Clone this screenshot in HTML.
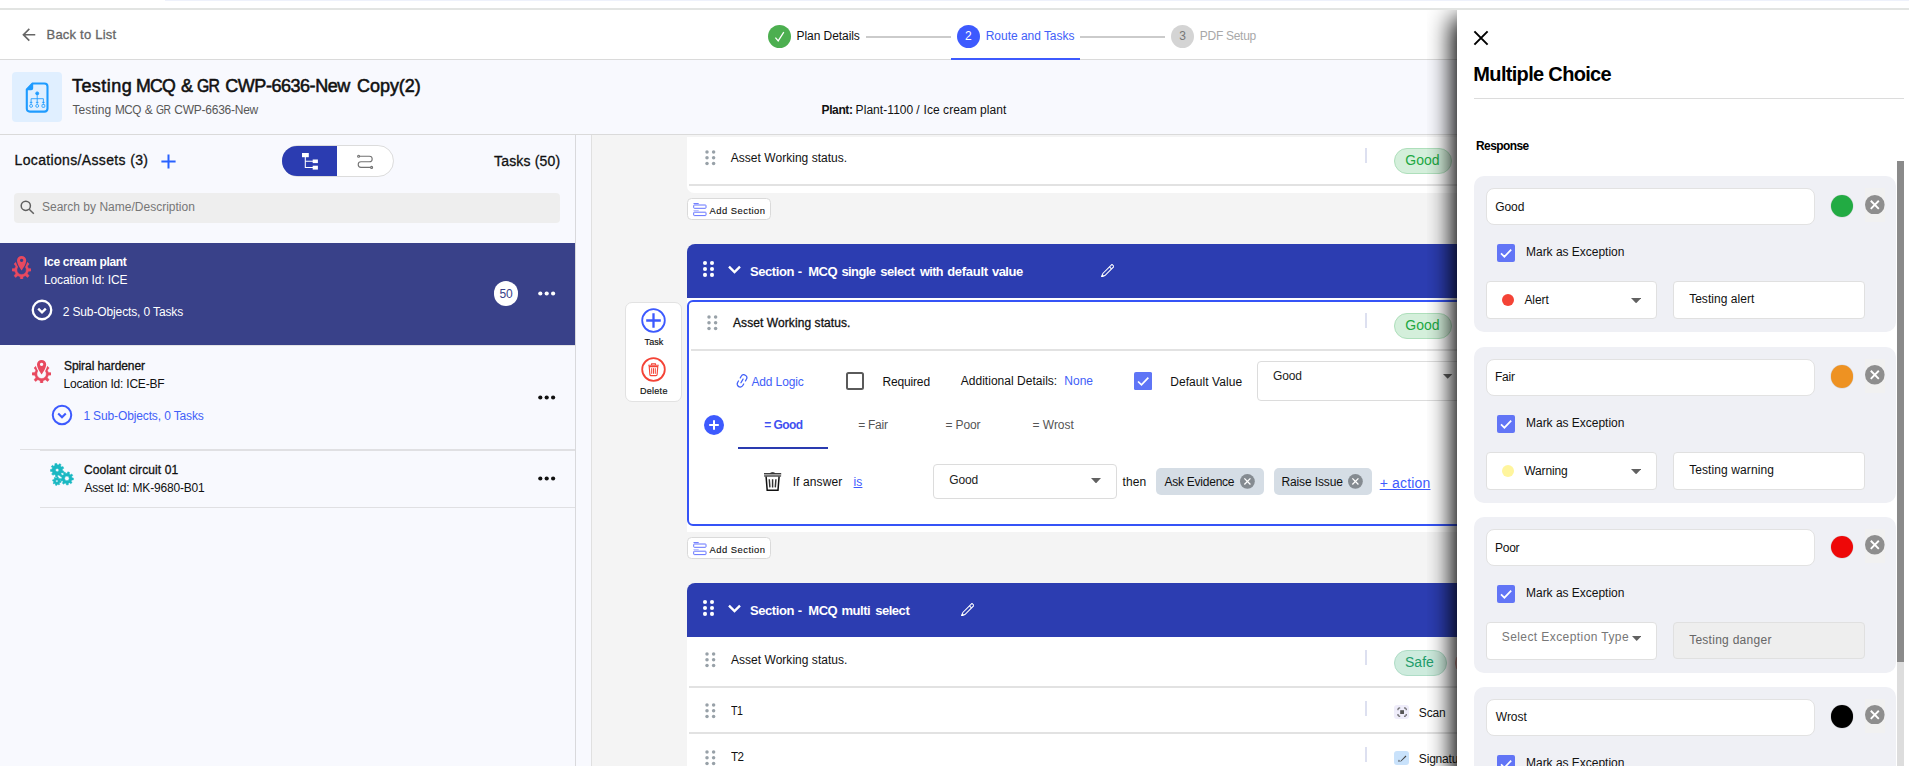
<!DOCTYPE html>
<html><head><meta charset="utf-8"><title>Route and Tasks</title>
<style>
html,body{margin:0;padding:0}
html{overflow:hidden;width:1909px;height:766px}
body{width:1909px;height:766px;overflow:hidden;background:#fff;position:relative;font-family:"Liberation Sans", sans-serif;}
.a{position:absolute;display:block}
.t{position:absolute;white-space:nowrap;line-height:1em;font-family:"Liberation Sans", sans-serif;}
b{font-weight:700}
#root{position:absolute;left:0;top:0;width:1909px;height:766px;overflow:hidden;background:#fff}
</style></head><body><div id="root">
<div class="a" style="left:165px;top:0;width:1744px;height:1px;background:#eef1fb"></div>
<div class="a" style="left:0;top:8px;width:1909px;height:2px;background:#e2e4e2"></div>
<div class="a" style="left:0;top:10px;width:1909px;height:49px;background:#fff"></div>
<div class="a" style="left:0;top:59px;width:1909px;height:1px;background:#dadada"></div>
<div class="a" style="left:0;top:60px;width:1909px;height:74px;background:#f8f9fe"></div>
<div class="a" style="left:0;top:134px;width:1909px;height:1px;background:#dadada"></div>
<svg class="a" style="left:18.75px;top:24.65px" width="19.5" height="19.5" viewBox="0 0 24 24"><path fill="#666" d="M20 11H7.83l5.59-5.59L12 4l-8 8 8 8 1.41-1.41L7.83 13H20v-2z"/></svg>
<div class="a" style="left:12px;top:72px;width:50px;height:50px;border-radius:4px;background:#e0efff"></div>
<svg class="a" style="left:25.2px;top:81.6px" width="24.4" height="31.2" viewBox="0 0 24.4 31.2"><g fill="none" stroke="#1e9bff" stroke-width="2.1" stroke-linejoin="round">
<path d="M7.6 1.5 H19.4 Q22.5 1.5 22.5 4.6 V26.5 Q22.5 29.6 19.4 29.6 H4.9 Q1.8 29.6 1.8 26.5 V7.6 Z"/></g>
<path d="M1.8 7.6 L7.6 1.5 V6.2 Q7.6 7.6 6.2 7.6 Z" fill="#1e9bff" stroke="#1e9bff" stroke-width="1.2" stroke-linejoin="round"/>
<g fill="none" stroke="#1e9bff" stroke-width="0.85"><circle cx="12.2" cy="11.4" r="1.5" stroke-width="0.9" fill="#1e9bff"/><path d="M12.2 13.2 V21.2 M6.1 21.2 V16.7 H18.4 V21.2"/>
<path d="M4.9 20.2 H7.3 L6.1 21.6 Z M11 20.2 H13.4 L12.2 21.6 Z M17.2 20.2 H19.6 L18.4 21.6 Z" fill="#1e9bff" stroke-width=".4"/>
<circle cx="6.1" cy="23.9" r="1.45"/><circle cx="12.2" cy="23.9" r="1.45"/><rect x="17" y="22.5" width="2.8" height="2.8" rx=".5"/></g></svg>
<div class="a" style="left:768.1px;top:24.9px;width:23px;height:23px;border-radius:50%;background:#4caf50"></div>
<svg class="a" style="left:773px;top:30px" width="14" height="13" viewBox="0 0 14 13"><path d="M2.4 7.6 L5.2 10.9 L10.8 2.2" fill="none" stroke="#fff" stroke-width="1.25"/></svg>
<div class="a" style="left:866px;top:36px;width:85px;height:2px;background:#cbcbcb"></div>
<div class="a" style="left:956.9px;top:24.9px;width:23px;height:23px;border-radius:50%;background:#3d5afe"></div>
<div class="a" style="left:1080px;top:36px;width:85px;height:2px;background:#cbcbcb"></div>
<div class="a" style="left:1171px;top:24.9px;width:23px;height:23px;border-radius:50%;background:#d4d4d4"></div>
<div class="a" style="left:951px;top:58px;width:129px;height:2px;background:#3d5afe"></div>
<div class="a" style="left:0;top:135px;width:575px;height:631px;background:#f8f9fe"></div>
<div class="a" style="left:575px;top:135px;width:1px;height:631px;background:#d9d9dc"></div>
<div class="a" style="left:576px;top:135px;width:15px;height:631px;background:#f8f9fe"></div>
<div class="a" style="left:591px;top:135px;width:1px;height:631px;background:#e0e0e0"></div>
<div class="a" style="left:592px;top:135px;width:900px;height:631px;background:#f4f4f4"></div>
<svg class="a" style="left:161.3px;top:153.6px" width="15" height="15" viewBox="0 0 15 15"><path d="M7.5 0.4 V14.6 M0.4 7.5 H14.6" stroke="#2962ff" stroke-width="2" fill="none"/></svg>
<div class="a" style="left:281.6px;top:145px;width:112.6px;height:31.8px;border-radius:15.9px;background:#fff;border:1px solid #dcdcdc;box-sizing:border-box"></div>
<div class="a" style="left:281.8px;top:146px;width:55.2px;height:29.8px;border-radius:14.9px 0 0 14.9px;background:#2b3cb1"></div>
<svg class="a" style="left:302px;top:153.3px" width="17" height="18" viewBox="0 0 17 18"><g fill="#fff"><rect x="0" y="0" width="6.8" height="4.2"/><rect x="10.7" y="6.5" width="5.2" height="3.6"/><rect x="10.7" y="12.7" width="5.2" height="3.9"/></g>
<path d="M3.3 4 V14.5 H11 M3.3 8.3 H11" fill="none" stroke="#fff" stroke-width="1.05"/></svg>
<svg class="a" style="left:355.6px;top:154.2px" width="19" height="16" viewBox="0 0 19 16"><g fill="none" stroke="#727272" stroke-width="1.1">
<circle cx="2.6" cy="2.2" r="1.0"/><path d="M3.6 2.2 H13.4 A2.8 2.8 0 0 1 13.4 7.8 H5 A2.8 2.8 0 0 0 5 13.4 H14.6"/><circle cx="15.6" cy="13.4" r="1.0"/></g></svg>
<div class="a" style="left:14px;top:193px;width:546px;height:30px;border-radius:4px;background:#eeeeee"></div>
<svg class="a" style="left:19.6px;top:200.2px" width="15" height="15" viewBox="0 0 15 15"><g fill="none" stroke="#606060" stroke-width="1.5"><circle cx="5.8" cy="5.8" r="4.6"/><path d="M9.2 9.2 L13.8 13.8"/></g></svg>
<div class="a" style="left:0;top:243px;width:575px;height:101.6px;background:#394189"></div>
<svg class="a" style="left:12.2px;top:255.7px" width="19.2" height="23.4" viewBox="0 0 19.2 23.4">
<path d="M16.35 12.45 L19.13 12.77 L19.13 15.03 L16.35 15.35 L15.40 17.64 L17.14 19.84 L15.54 21.44 L13.34 19.70 L11.05 20.65 L10.73 23.43 L8.47 23.43 L8.15 20.65 L5.86 19.70 L3.66 21.44 L2.06 19.84 L3.80 17.64 L2.85 15.35 L0.07 15.03 L0.07 12.77 L2.85 12.45 L3.80 10.16 L2.06 7.96 L3.66 6.36 L5.86 8.10 L8.15 7.15 L8.47 4.37 L10.73 4.37 L11.05 7.15 L13.34 8.10 L15.54 6.36 L17.14 7.96 L15.40 10.16 Z M14.30 13.90 A4.7 4.7 0 1 0 4.90 13.90 A4.7 4.7 0 1 0 14.30 13.90 Z" fill="#e8495f" fill-rule="evenodd" stroke="#e8495f" stroke-width=".5" stroke-linejoin="round"/>
<path d="M9.6 14.6 C9.6 14.6 5 8.6 5 4.6 A4.6 4.6 0 0 1 14.2 4.6 C14.2 8.6 9.6 14.6 9.6 14.6 Z" fill="#394189" stroke="#394189" stroke-width="2.1"/>
<path fill-rule="evenodd" fill="#e8495f" d="M9.6 14.5 C9.6 14.5 5 8.6 5 4.6 A4.6 4.6 0 0 1 14.2 4.6 C14.2 8.6 9.6 14.5 9.6 14.5 Z M9.6 2.7 A1.65 1.65 0 1 0 9.61 2.7 Z"/>
</svg>
<svg class="a" style="left:30.6px;top:299px" width="22" height="22" viewBox="0 0 22 22">
<circle cx="11" cy="11" r="9.25" fill="none" stroke="#fff" stroke-width="2.3"/>
<path d="M7.2 9.6 L11 13.3 L14.8 9.6" fill="none" stroke="#fff" stroke-width="2.4"/></svg>
<div class="a" style="left:493.9px;top:281.1px;width:24.6px;height:24.6px;border-radius:50%;background:#fff"></div>
<svg class="a" style="left:538px;top:291.2px" width="18" height="5" viewBox="0 0 18 5">
<circle cx="2.3" cy="2.5" r="2.1" fill="#fff"/><circle cx="8.7" cy="2.5" r="2.1" fill="#fff"/><circle cx="15.1" cy="2.5" r="2.1" fill="#fff"/></svg>
<div class="a" style="left:20px;top:345px;width:555px;height:1px;background:#e3e3e6"></div>
<svg class="a" style="left:32.1px;top:359.9px" width="19.2" height="23.4" viewBox="0 0 19.2 23.4">
<path d="M16.35 12.45 L19.13 12.77 L19.13 15.03 L16.35 15.35 L15.40 17.64 L17.14 19.84 L15.54 21.44 L13.34 19.70 L11.05 20.65 L10.73 23.43 L8.47 23.43 L8.15 20.65 L5.86 19.70 L3.66 21.44 L2.06 19.84 L3.80 17.64 L2.85 15.35 L0.07 15.03 L0.07 12.77 L2.85 12.45 L3.80 10.16 L2.06 7.96 L3.66 6.36 L5.86 8.10 L8.15 7.15 L8.47 4.37 L10.73 4.37 L11.05 7.15 L13.34 8.10 L15.54 6.36 L17.14 7.96 L15.40 10.16 Z M14.30 13.90 A4.7 4.7 0 1 0 4.90 13.90 A4.7 4.7 0 1 0 14.30 13.90 Z" fill="#e8495f" fill-rule="evenodd" stroke="#e8495f" stroke-width=".5" stroke-linejoin="round"/>
<path d="M9.6 14.6 C9.6 14.6 5 8.6 5 4.6 A4.6 4.6 0 0 1 14.2 4.6 C14.2 8.6 9.6 14.6 9.6 14.6 Z" fill="#f8f9fe" stroke="#f8f9fe" stroke-width="2.1"/>
<path fill-rule="evenodd" fill="#e8495f" d="M9.6 14.5 C9.6 14.5 5 8.6 5 4.6 A4.6 4.6 0 0 1 14.2 4.6 C14.2 8.6 9.6 14.5 9.6 14.5 Z M9.6 2.7 A1.65 1.65 0 1 0 9.61 2.7 Z"/>
</svg>
<svg class="a" style="left:50.8px;top:404.2px" width="22" height="22" viewBox="0 0 22 22">
<circle cx="11" cy="11" r="9.25" fill="none" stroke="#3d5afe" stroke-width="2.0"/>
<path d="M7.2 9.6 L11 13.3 L14.8 9.6" fill="none" stroke="#3d5afe" stroke-width="2.1"/></svg>
<svg class="a" style="left:538px;top:395.2px" width="18" height="5" viewBox="0 0 18 5">
<circle cx="2.3" cy="2.5" r="2.1" fill="#111"/><circle cx="8.7" cy="2.5" r="2.1" fill="#111"/><circle cx="15.1" cy="2.5" r="2.1" fill="#111"/></svg>
<div class="a" style="left:20px;top:449px;width:555px;height:1px;background:#e0e0e3"></div>
<div class="a" style="left:40px;top:450px;width:535px;height:1px;background:#e0e0e3"></div>
<svg class="a" style="left:50.0px;top:463.2px" width="24" height="23" viewBox="0 0 24 23">
<g fill="#1ab8c2" fill-rule="evenodd" stroke="#1ab8c2" stroke-width=".5" stroke-linejoin="round">
<path d="M12.43 7.57 L13.91 8.19 L13.35 9.99 L11.78 9.66 L10.90 10.82 L11.64 12.25 L10.05 13.27 L9.07 12.01 L7.64 12.33 L7.30 13.90 L5.42 13.66 L5.47 12.06 L4.17 11.39 L2.90 12.37 L1.62 10.98 L2.69 9.79 L2.12 8.44 L0.52 8.38 L0.43 6.49 L2.02 6.26 L2.45 4.87 L1.26 3.78 L2.41 2.28 L3.77 3.13 L5.00 2.33 L4.78 0.74 L6.63 0.32 L7.13 1.85 L8.58 2.03 L9.44 0.68 L11.12 1.54 L10.52 3.03 L11.51 4.10 L13.04 3.62 L13.77 5.36 L12.36 6.12 Z M8.90 7.10 A1.7 1.7 0 1 0 5.50 7.10 A1.7 1.7 0 1 0 8.90 7.10 Z"/>
<path d="M21.97 14.84 L23.49 15.14 L23.31 16.97 L21.76 16.95 L21.14 18.23 L22.12 19.44 L20.80 20.72 L19.62 19.71 L18.33 20.30 L18.30 21.85 L16.47 21.99 L16.21 20.45 L14.85 20.07 L13.83 21.24 L12.34 20.17 L13.13 18.83 L12.33 17.66 L10.79 17.90 L10.34 16.12 L11.80 15.60 L11.95 14.19 L10.61 13.39 L11.41 11.74 L12.87 12.28 L13.88 11.29 L13.38 9.82 L15.05 9.06 L15.82 10.42 L17.23 10.31 L17.79 8.86 L19.56 9.36 L19.27 10.89 L20.43 11.71 L21.78 10.96 L22.82 12.48 L21.62 13.47 Z M19.20 15.40 A2.3 2.3 0 1 0 14.60 15.40 A2.3 2.3 0 1 0 19.20 15.40 Z"/>
<path d="M10.20 17.98 L11.20 18.28 L10.93 19.60 L9.89 19.49 L9.32 20.35 L9.81 21.27 L8.69 22.01 L8.03 21.20 L7.02 21.40 L6.72 22.40 L5.40 22.13 L5.51 21.09 L4.65 20.52 L3.73 21.01 L2.99 19.89 L3.80 19.23 L3.60 18.22 L2.60 17.92 L2.87 16.60 L3.91 16.71 L4.48 15.85 L3.99 14.93 L5.11 14.19 L5.77 15.00 L6.78 14.80 L7.08 13.80 L8.40 14.07 L8.29 15.11 L9.15 15.68 L10.07 15.19 L10.81 16.31 L10.00 16.97 Z M8.05 18.10 A1.15 1.15 0 1 0 5.75 18.10 A1.15 1.15 0 1 0 8.05 18.10 Z"/>
</g></svg>
<svg class="a" style="left:538px;top:476.3px" width="18" height="5" viewBox="0 0 18 5">
<circle cx="2.3" cy="2.5" r="2.1" fill="#111"/><circle cx="8.7" cy="2.5" r="2.1" fill="#111"/><circle cx="15.1" cy="2.5" r="2.1" fill="#111"/></svg>
<div class="a" style="left:40px;top:507px;width:535px;height:1px;background:#e0e0e3"></div>
<div class="a" style="left:687px;top:137px;width:800px;height:55.8px;background:#fff;border-radius:0 0 0 7px"></div>
<div class="a" style="left:689px;top:184px;width:800px;height:2px;background:#e2e2e2"></div>
<svg class="a" style="left:703.6px;top:149.2px" width="14" height="19" viewBox="0 0 14 19"><circle cx="3.0" cy="3.0" r="1.75" fill="#98a1a8"/><circle cx="3.0" cy="8.75" r="1.75" fill="#98a1a8"/><circle cx="3.0" cy="14.5" r="1.75" fill="#98a1a8"/><circle cx="9.6" cy="3.0" r="1.75" fill="#98a1a8"/><circle cx="9.6" cy="8.75" r="1.75" fill="#98a1a8"/><circle cx="9.6" cy="14.5" r="1.75" fill="#98a1a8"/></svg>
<div class="a" style="left:1365px;top:148px;width:2px;height:15px;background:#dde0f0"></div>
<div class="a" style="left:1394px;top:148px;width:57.5px;height:26px;border-radius:13.0px;background:#d4efdb;border:1px solid #aedfbb;box-sizing:border-box"></div>
<div class="a" style="left:687.4px;top:198.3px;width:83.2px;height:21.5px;border:1px solid #dadada;border-radius:4.5px;background:#fff;box-sizing:border-box"></div>
<svg class="a" style="left:692.5px;top:202.70000000000002px" width="14" height="14" viewBox="0 0 14 14"><g fill="none" stroke="#6473ff" stroke-width="1">
<path d="M0.5 0.6 H5.7"/><path d="M0.5 7.7 H5.7" opacity=".55"/><rect x="0.7" y="2.0" width="12.3" height="3.3" rx=".6"/><rect x="0.7" y="9.2" width="12.3" height="3.4" rx=".6"/></g></svg>
<div class="a" style="left:687px;top:244px;width:800px;height:54px;background:#2c3db1;border-radius:8px 0 0 0"></div>
<svg class="a" style="left:702px;top:260.2px" width="14" height="19" viewBox="0 0 14 19"><circle cx="3" cy="3.0" r="2.05" fill="#fff"/><circle cx="3" cy="8.95" r="2.05" fill="#fff"/><circle cx="3" cy="14.9" r="2.05" fill="#fff"/><circle cx="10" cy="3.0" r="2.05" fill="#fff"/><circle cx="10" cy="8.95" r="2.05" fill="#fff"/><circle cx="10" cy="14.9" r="2.05" fill="#fff"/></svg>
<svg class="a" style="left:727px;top:265px" width="15" height="10" viewBox="0 0 15 10"><path d="M2 1.7 L7.5 7.2 L13 1.7" fill="none" stroke="#fff" stroke-width="2.35"/></svg>
<svg class="a" style="left:1100.7px;top:263.7px" width="13.6" height="13.6" viewBox="0 0 13.6 13.6"><g transform="translate(0.55 12.85) rotate(-45)" fill="none" stroke="#fff" stroke-width="1.05" stroke-linejoin="miter">
<path d="M0 0 L3.3 -1.45 H16.2 V1.45 H3.3 Z"/><path d="M12.6 -1.45 V1.45"/><path d="M0 0 L2 -0.9 V0.9 Z" fill="#fff" stroke-width=".6"/></g></svg>
<div class="a" style="left:687px;top:298px;width:800px;height:234px;background:#fff"></div>
<div class="a" style="left:687px;top:300px;width:800px;height:226.2px;border:2px solid #3553f7;border-radius:6px 0 0 6px;box-sizing:border-box;background:#fff"></div>
<div class="a" style="left:691px;top:349px;width:800px;height:2px;background:#e2e2e2"></div>
<svg class="a" style="left:706.0px;top:314.2px" width="14" height="19" viewBox="0 0 14 19"><circle cx="3.0" cy="3.0" r="1.75" fill="#98a1a8"/><circle cx="3.0" cy="8.75" r="1.75" fill="#98a1a8"/><circle cx="3.0" cy="14.5" r="1.75" fill="#98a1a8"/><circle cx="9.6" cy="3.0" r="1.75" fill="#98a1a8"/><circle cx="9.6" cy="8.75" r="1.75" fill="#98a1a8"/><circle cx="9.6" cy="14.5" r="1.75" fill="#98a1a8"/></svg>
<div class="a" style="left:1365px;top:313px;width:2px;height:15px;background:#dde0f0"></div>
<div class="a" style="left:1394px;top:313px;width:57.5px;height:26px;border-radius:13.0px;background:#d4efdb;border:1px solid #aedfbb;box-sizing:border-box"></div>
<div class="a" style="left:625.4px;top:302.3px;width:56.2px;height:99.6px;border:1px solid #e2e2e2;border-radius:7px;background:#fff;box-sizing:border-box"></div>
<svg class="a" style="left:640.9px;top:307.5px" width="25" height="25" viewBox="0 0 25 25"><g fill="none" stroke="#3d5afe"><circle cx="12.5" cy="12.5" r="11.3" stroke-width="1.8"/><path d="M12.5 5.2 V19.8 M5.2 12.5 H19.8" stroke-width="2.3"/></g></svg>
<svg class="a" style="left:640.9px;top:356.9px" width="25" height="25" viewBox="0 0 25 25"><g fill="none" stroke="#f44336"><circle cx="12.5" cy="12.5" r="11.3" stroke-width="1.8"/>
<path d="M7.2 8.3 H17.8 M10.6 8.1 V6.7 H14.4 V8.1" stroke-width="1.1"/><path d="M8.2 9.6 L8.9 17.6 Q9 18.6 10 18.6 H15 Q16 18.6 16.1 17.6 L16.8 9.6 Z" stroke-width="1.1"/><path d="M10.7 11.2 V16.8 M12.5 11.2 V16.8 M14.3 11.2 V16.8" stroke-width="1"/></g></svg>
<svg class="a" style="left:735.6px;top:374.2px" width="12" height="14" viewBox="0 0 12 14"><g transform="translate(6 6.9) rotate(-60) scale(0.6) translate(-12 -12)" fill="none" stroke="#4260f8" stroke-width="2.1" stroke-linecap="round">
<path d="M15 7h3a5 5 0 0 1 5 5 5 5 0 0 1-5 5h-3"/><path d="M9 17H6a5 5 0 0 1-5-5 5 5 0 0 1 5-5h3"/><path d="M8.5 12 H15.5"/></g></svg>
<div class="a" style="left:846.2px;top:372.2px;width:17.6px;height:17.6px;border:2px solid #5a5a5a;border-radius:2.5px;box-sizing:border-box;background:#fff"></div>
<svg class="a" style="left:1134.2px;top:371.8px" width="18.2" height="18.2" viewBox="0 0 18 18"><rect width="18" height="18" rx="2" fill="#5f75f6"/>
<path d="M4 9.4 L7.4 12.7 L14.2 5.6" fill="none" stroke="#fff" stroke-width="1.7"/></svg>
<div class="a" style="left:1257.2px;top:361.3px;width:260px;height:39.4px;border:1px solid #dcdcdc;border-radius:4px;box-sizing:border-box;background:#fff"></div>
<svg class="a" style="left:1443.2px;top:374.2px" width="9.4" height="4.8" viewBox="0 0 9.4 4.8"><path d="M0 0 H9.4 L4.7 4.8 Z" fill="#616161"/></svg>
<div class="a" style="left:704.3px;top:415px;width:20px;height:20px;border-radius:50%;background:#3d5afe"></div>
<svg class="a" style="left:708.3px;top:419px" width="12" height="12" viewBox="0 0 12 12"><path d="M6 1.2 V10.8 M1.2 6 H10.8" stroke="#fff" stroke-width="2" fill="none"/></svg>
<div class="a" style="left:738px;top:447px;width:90px;height:2px;background:#2a3bb0"></div>
<svg class="a" style="left:764.4px;top:472px" width="17.2" height="19.4" viewBox="0 0 17.2 19.4">
<rect x="0" y="1.2" width="17.2" height="1.1" fill="#111"/><rect x="0" y="2.3" width="17.2" height="2.2" fill="#9a9a9a"/><rect x="0.3" y="3.6" width="16.6" height="1.0" fill="#444"/>
<path d="M5.6 1.3 Q8.6 -0.6 11.6 1.3 Z" fill="#111"/>
<g fill="none" stroke="#111"><path d="M2.1 4.6 L3.2 18.3 H14 L15.1 4.6" stroke-width="1.5" stroke-linejoin="miter"/>
<path d="M5.3 7.3 L5.9 15.4 M8.6 7.3 V15.4 M11.9 7.3 L11.3 15.4" stroke="#333" stroke-width="1.45"/></g></svg>
<div class="a" style="left:933.4px;top:464.2px;width:183.2px;height:34.6px;border:1px solid #dcdcdc;border-radius:4px;box-sizing:border-box;background:#fff"></div>
<svg class="a" style="left:1091px;top:477.8px" width="10" height="5.4" viewBox="0 0 10 5.4"><path d="M0 0 H10 L5.0 5.4 Z" fill="#616161"/></svg>
<div class="a" style="left:1156.2px;top:468.4px;width:107.4px;height:26.2px;border-radius:5px;background:#d5dde5"></div>
<svg class="a" style="left:1239.8px;top:474.0px" width="14.8" height="14.8" viewBox="0 0 14.8 14.8"><circle cx="7.4" cy="7.4" r="7.4" fill="#858b91"/>
<path d="M4.3660000000000005 4.3660000000000005 L10.434000000000001 10.434000000000001 M10.434000000000001 4.3660000000000005 L4.3660000000000005 10.434000000000001" stroke="#fff" stroke-width="1.3" fill="none"/></svg>
<div class="a" style="left:1274.2px;top:468.4px;width:97.4px;height:26.2px;border-radius:5px;background:#d5dde5"></div>
<svg class="a" style="left:1347.8999999999999px;top:474.0px" width="14.8" height="14.8" viewBox="0 0 14.8 14.8"><circle cx="7.4" cy="7.4" r="7.4" fill="#858b91"/>
<path d="M4.3660000000000005 4.3660000000000005 L10.434000000000001 10.434000000000001 M10.434000000000001 4.3660000000000005 L4.3660000000000005 10.434000000000001" stroke="#fff" stroke-width="1.3" fill="none"/></svg>
<div class="a" style="left:687.4px;top:537.3px;width:83.2px;height:21.5px;border:1px solid #dadada;border-radius:4.5px;background:#fff;box-sizing:border-box"></div>
<svg class="a" style="left:692.5px;top:541.6999999999999px" width="14" height="14" viewBox="0 0 14 14"><g fill="none" stroke="#6473ff" stroke-width="1">
<path d="M0.5 0.6 H5.7"/><path d="M0.5 7.7 H5.7" opacity=".55"/><rect x="0.7" y="2.0" width="12.3" height="3.3" rx=".6"/><rect x="0.7" y="9.2" width="12.3" height="3.4" rx=".6"/></g></svg>
<div class="a" style="left:687px;top:583px;width:800px;height:54px;background:#2c3db1;border-radius:8px 0 0 0"></div>
<svg class="a" style="left:702px;top:599.2px" width="14" height="19" viewBox="0 0 14 19"><circle cx="3" cy="3.0" r="2.05" fill="#fff"/><circle cx="3" cy="8.95" r="2.05" fill="#fff"/><circle cx="3" cy="14.9" r="2.05" fill="#fff"/><circle cx="10" cy="3.0" r="2.05" fill="#fff"/><circle cx="10" cy="8.95" r="2.05" fill="#fff"/><circle cx="10" cy="14.9" r="2.05" fill="#fff"/></svg>
<svg class="a" style="left:727px;top:604px" width="15" height="10" viewBox="0 0 15 10"><path d="M2 1.7 L7.5 7.2 L13 1.7" fill="none" stroke="#fff" stroke-width="2.35"/></svg>
<svg class="a" style="left:960.7px;top:602.7px" width="13.6" height="13.6" viewBox="0 0 13.6 13.6"><g transform="translate(0.55 12.85) rotate(-45)" fill="none" stroke="#fff" stroke-width="1.05" stroke-linejoin="miter">
<path d="M0 0 L3.3 -1.45 H16.2 V1.45 H3.3 Z"/><path d="M12.6 -1.45 V1.45"/><path d="M0 0 L2 -0.9 V0.9 Z" fill="#fff" stroke-width=".6"/></g></svg>
<div class="a" style="left:687px;top:637px;width:800px;height:140px;background:#fff"></div>
<div class="a" style="left:689px;top:686px;width:800px;height:2px;background:#e2e2e2"></div>
<div class="a" style="left:689px;top:732px;width:800px;height:2px;background:#e2e2e2"></div>
<svg class="a" style="left:703.6px;top:651.1px" width="14" height="19" viewBox="0 0 14 19"><circle cx="3.0" cy="3.0" r="1.75" fill="#98a1a8"/><circle cx="3.0" cy="8.75" r="1.75" fill="#98a1a8"/><circle cx="3.0" cy="14.5" r="1.75" fill="#98a1a8"/><circle cx="9.6" cy="3.0" r="1.75" fill="#98a1a8"/><circle cx="9.6" cy="8.75" r="1.75" fill="#98a1a8"/><circle cx="9.6" cy="14.5" r="1.75" fill="#98a1a8"/></svg>
<svg class="a" style="left:703.6px;top:702.3000000000001px" width="14" height="19" viewBox="0 0 14 19"><circle cx="3.0" cy="3.0" r="1.75" fill="#98a1a8"/><circle cx="3.0" cy="8.75" r="1.75" fill="#98a1a8"/><circle cx="3.0" cy="14.5" r="1.75" fill="#98a1a8"/><circle cx="9.6" cy="3.0" r="1.75" fill="#98a1a8"/><circle cx="9.6" cy="8.75" r="1.75" fill="#98a1a8"/><circle cx="9.6" cy="14.5" r="1.75" fill="#98a1a8"/></svg>
<svg class="a" style="left:703.6px;top:748.5px" width="14" height="19" viewBox="0 0 14 19"><circle cx="3.0" cy="3.0" r="1.75" fill="#98a1a8"/><circle cx="3.0" cy="8.75" r="1.75" fill="#98a1a8"/><circle cx="3.0" cy="14.5" r="1.75" fill="#98a1a8"/><circle cx="9.6" cy="3.0" r="1.75" fill="#98a1a8"/><circle cx="9.6" cy="8.75" r="1.75" fill="#98a1a8"/><circle cx="9.6" cy="14.5" r="1.75" fill="#98a1a8"/></svg>
<div class="a" style="left:1365px;top:650px;width:2px;height:15px;background:#dde0f0"></div>
<div class="a" style="left:1365px;top:701px;width:2px;height:15px;background:#dde0f0"></div>
<div class="a" style="left:1365px;top:747px;width:2px;height:15px;background:#dde0f0"></div>
<div class="a" style="left:1394.2px;top:650px;width:52.6px;height:26px;border-radius:13.0px;background:#cdebdd;border:1px solid #aedcc6;box-sizing:border-box"></div>
<div class="a" style="left:1455px;top:650px;width:50px;height:26px;border-radius:13.0px;background:#f5c9c4;border:1px solid #e8a49c;box-sizing:border-box"></div>
<div class="a" style="left:1394.4px;top:704.9px;width:14.6px;height:14.6px;border-radius:3px;background:#efedfa"></div>
<svg class="a" style="left:1394.6px;top:705px" width="14.2" height="14.2" viewBox="0 0 14.2 14.2"><g fill="none" stroke="#444" stroke-width="1">
<path d="M3 5.2 V4 Q3 3 4 3 H5.2 M9 3 H10.2 Q11.2 3 11.2 4 V5.2 M11.2 9 V10.2 Q11.2 11.2 10.2 11.2 H9 M5.2 11.2 H4 Q3 11.2 3 10.2 V9"/></g><rect x="5.2" y="5.2" width="3.8" height="3.8" fill="#555"/></svg>
<div class="a" style="left:1394.4px;top:750.5px;width:14.6px;height:14.6px;border-radius:3px;background:#c9e2fb"></div>
<svg class="a" style="left:1394.6px;top:750.6px" width="14.2" height="14.2" viewBox="0 0 14.2 14.2"><path d="M3 10.6 L4 8.4 L5 10.4 L10.6 4.6 L11.4 5.4 L6 10.6 Z" fill="#444"/></svg>
<span class="t" style="left:46.53px;top:28.00px;font-size:13px;color:#666;-webkit-text-stroke:0.3px currentColor;letter-spacing:0.214px;">Back to List</span>
<span class="t" style="left:71.90px;top:77.00px;font-size:18px;color:#111;-webkit-text-stroke:0.3px currentColor;letter-spacing:0.486px;-webkit-text-stroke:0.55px currentColor;">Testing</span>
<span class="t" style="left:136.14px;top:77.00px;font-size:18px;color:#111;-webkit-text-stroke:0.3px currentColor;letter-spacing:-0.810px;transform:scaleX(0.9857);transform-origin:0 0;-webkit-text-stroke:0.55px currentColor;">MCQ</span>
<span class="t" style="left:181.07px;top:77.00px;font-size:18px;color:#111;-webkit-text-stroke:0.3px currentColor;-webkit-text-stroke:0.55px currentColor;">&amp;</span>
<span class="t" style="left:197.20px;top:77.00px;font-size:18px;color:#111;-webkit-text-stroke:0.3px currentColor;letter-spacing:-0.810px;transform:scaleX(0.8794);transform-origin:0 0;-webkit-text-stroke:0.55px currentColor;">GR</span>
<span class="t" style="left:225.29px;top:77.00px;font-size:18px;color:#111;-webkit-text-stroke:0.3px currentColor;letter-spacing:-0.462px;-webkit-text-stroke:0.55px currentColor;">CWP-6636-New</span>
<span class="t" style="left:356.99px;top:77.00px;font-size:18px;color:#111;-webkit-text-stroke:0.3px currentColor;letter-spacing:-0.033px;-webkit-text-stroke:0.55px currentColor;">Copy(2)</span>
<span class="t" style="left:72.43px;top:104.00px;font-size:12px;color:#575757;letter-spacing:0.135px;">Testing</span>
<span class="t" style="left:114.94px;top:104.00px;font-size:12px;color:#575757;letter-spacing:-0.540px;transform:scaleX(0.9779);transform-origin:0 0;">MCQ</span>
<span class="t" style="left:144.78px;top:104.00px;font-size:12px;color:#575757;">&amp;</span>
<span class="t" style="left:155.58px;top:104.00px;font-size:12px;color:#575757;letter-spacing:-0.540px;transform:scaleX(0.8589);transform-origin:0 0;">GR</span>
<span class="t" style="left:174.29px;top:104.00px;font-size:12px;color:#575757;letter-spacing:-0.248px;">CWP-6636-New</span>
<span class="t" style="left:821.50px;top:104.00px;font-size:12px;color:#111;font-weight:700;letter-spacing:-0.377px;">Plant:</span>
<span class="t" style="left:855.62px;top:104.00px;font-size:12px;color:#111;letter-spacing:0.055px;">Plant-1100</span>
<span class="t" style="left:916.30px;top:104.00px;font-size:12px;color:#111;">/</span>
<span class="t" style="left:923.59px;top:104.00px;font-size:12px;color:#111;letter-spacing:0.046px;">Ice cream plant</span>
<span class="t" style="left:796.52px;top:30.00px;font-size:12px;color:#111;letter-spacing:-0.065px;">Plan Details</span>
<span class="t" style="left:985.72px;top:30.00px;font-size:12px;color:#4260f8;letter-spacing:-0.032px;">Route and Tasks</span>
<span class="t" style="left:1199.82px;top:30.00px;font-size:12px;color:#a8a8a8;letter-spacing:-0.289px;">PDF Setup</span>
<span class="t" style="left:965.10px;top:30.00px;font-size:12px;color:#fff;">2</span>
<span class="t" style="left:1179.24px;top:30.00px;font-size:12px;color:#777;">3</span>
<span class="t" style="left:14.55px;top:153.00px;font-size:14px;color:#111;-webkit-text-stroke:0.3px currentColor;letter-spacing:0.346px;">Locations/Assets (3)</span>
<span class="t" style="left:494.09px;top:154.00px;font-size:14px;color:#111;-webkit-text-stroke:0.3px currentColor;letter-spacing:0.167px;">Tasks (50)</span>
<span class="t" style="left:41.96px;top:201.00px;font-size:12px;color:#777;letter-spacing:0.008px;">Search by Name/Description</span>
<span class="t" style="left:44.10px;top:256.00px;font-size:12px;color:#fff;font-weight:700;letter-spacing:-0.330px;">Ice cream plant</span>
<span class="t" style="left:43.92px;top:274.00px;font-size:12px;color:#fff;letter-spacing:-0.119px;">Location Id: ICE</span>
<span class="t" style="left:62.70px;top:306.00px;font-size:12px;color:#fff;letter-spacing:-0.125px;">2 Sub-Objects, 0 Tasks</span>
<span class="t" style="left:499.52px;top:288.00px;font-size:12px;color:#394189;letter-spacing:-0.110px;">50</span>
<span class="t" style="left:63.96px;top:360.00px;font-size:12px;color:#111;-webkit-text-stroke:0.3px currentColor;letter-spacing:-0.066px;">Spiral hardener</span>
<span class="t" style="left:63.52px;top:378.00px;font-size:12px;color:#111;letter-spacing:-0.203px;">Location Id: ICE-BF</span>
<span class="t" style="left:83.39px;top:410.00px;font-size:12px;color:#4260f8;letter-spacing:-0.130px;">1 Sub-Objects, 0 Tasks</span>
<span class="t" style="left:83.89px;top:464.00px;font-size:12px;color:#111;-webkit-text-stroke:0.3px currentColor;letter-spacing:0.087px;">Coolant circuit 01</span>
<span class="t" style="left:84.48px;top:482.00px;font-size:12px;color:#111;letter-spacing:-0.193px;">Asset Id: MK-9680-B01</span>
<span class="t" style="left:730.78px;top:152.00px;font-size:12px;color:#111;letter-spacing:0.030px;">Asset Working status.</span>
<span class="t" style="left:1405.20px;top:153.00px;font-size:14px;color:#20a842;letter-spacing:0.052px;">Good</span>
<span class="t" style="left:709.58px;top:205.80px;font-size:9.4px;color:#111;letter-spacing:0.487px;-webkit-text-stroke:0.12px currentColor;">Add Section</span>
<span class="t" style="left:749.93px;top:265.00px;font-size:13px;color:#fff;font-weight:700;letter-spacing:-0.415px;">Section</span>
<span class="t" style="left:797.79px;top:265.00px;font-size:13px;color:#fff;font-weight:700;">-</span>
<span class="t" style="left:808.33px;top:265.00px;font-size:13px;color:#fff;font-weight:700;letter-spacing:-0.585px;">MCQ</span>
<span class="t" style="left:841.44px;top:265.00px;font-size:13px;color:#fff;font-weight:700;letter-spacing:-0.585px;">single</span>
<span class="t" style="left:880.14px;top:265.00px;font-size:13px;color:#fff;font-weight:700;letter-spacing:-0.412px;">select</span>
<span class="t" style="left:919.84px;top:265.00px;font-size:13px;color:#fff;font-weight:700;letter-spacing:-0.585px;transform:scaleX(0.9712);transform-origin:0 0;">with</span>
<span class="t" style="left:947.17px;top:265.00px;font-size:13px;color:#fff;font-weight:700;letter-spacing:-0.289px;">default</span>
<span class="t" style="left:991.95px;top:265.00px;font-size:13px;color:#fff;font-weight:700;letter-spacing:-0.514px;">value</span>
<span class="t" style="left:732.98px;top:317.00px;font-size:12px;color:#111;-webkit-text-stroke:0.3px currentColor;letter-spacing:0.080px;">Asset Working status.</span>
<span class="t" style="left:1405.20px;top:318.00px;font-size:14px;color:#20a842;letter-spacing:0.052px;">Good</span>
<span class="t" style="left:644.60px;top:337.50px;font-size:9px;color:#111;letter-spacing:0.058px;-webkit-text-stroke:0.18px currentColor;">Task</span>
<span class="t" style="left:639.96px;top:386.50px;font-size:9px;color:#111;letter-spacing:0.285px;-webkit-text-stroke:0.18px currentColor;">Delete</span>
<span class="t" style="left:751.38px;top:376.00px;font-size:12px;color:#4260f8;letter-spacing:-0.117px;">Add Logic</span>
<span class="t" style="left:882.42px;top:376.00px;font-size:12px;color:#111;letter-spacing:-0.149px;">Required</span>
<span class="t" style="left:960.78px;top:375.00px;font-size:12px;color:#111;letter-spacing:0.020px;">Additional Details:</span>
<span class="t" style="left:1064.32px;top:375.00px;font-size:12px;color:#4260f8;letter-spacing:0.010px;">None</span>
<span class="t" style="left:1170.22px;top:376.00px;font-size:12px;color:#111;letter-spacing:0.063px;">Default Value</span>
<span class="t" style="left:1273.00px;top:370.00px;font-size:12px;color:#222;letter-spacing:-0.127px;">Good</span>
<span class="t" style="left:764.20px;top:419.00px;font-size:12px;color:#3f51f0;font-weight:700;letter-spacing:-0.540px;">= Good</span>
<span class="t" style="left:858.31px;top:419.00px;font-size:12px;color:#555;letter-spacing:-0.286px;">= Fair</span>
<span class="t" style="left:945.51px;top:419.00px;font-size:12px;color:#555;letter-spacing:-0.144px;">= Poor</span>
<span class="t" style="left:1032.61px;top:419.00px;font-size:12px;color:#555;letter-spacing:-0.049px;">= Wrost</span>
<span class="t" style="left:792.69px;top:476.00px;font-size:12px;color:#111;letter-spacing:0.102px;">If answer</span>
<span class="t" style="left:853.60px;top:476.00px;font-size:12px;color:#3d5afe;letter-spacing:0.064px;text-decoration:underline;">is</span>
<span class="t" style="left:949.20px;top:474.00px;font-size:12px;color:#222;letter-spacing:-0.127px;">Good</span>
<span class="t" style="left:1122.62px;top:476.00px;font-size:12px;color:#111;letter-spacing:0.067px;">then</span>
<span class="t" style="left:1164.38px;top:476.00px;font-size:12px;color:#111;letter-spacing:-0.231px;">Ask Evidence</span>
<span class="t" style="left:1281.42px;top:476.00px;font-size:12px;color:#111;letter-spacing:-0.119px;">Raise Issue</span>
<span class="t" style="left:1379.72px;top:476.00px;font-size:14px;color:#3d5afe;letter-spacing:0.165px;text-decoration:underline;">+ action</span>
<span class="t" style="left:709.58px;top:544.80px;font-size:9.4px;color:#111;letter-spacing:0.487px;-webkit-text-stroke:0.12px currentColor;">Add Section</span>
<span class="t" style="left:749.93px;top:604.00px;font-size:13px;color:#fff;font-weight:700;letter-spacing:-0.398px;">Section</span>
<span class="t" style="left:797.79px;top:604.00px;font-size:13px;color:#fff;font-weight:700;">-</span>
<span class="t" style="left:808.33px;top:604.00px;font-size:13px;color:#fff;font-weight:700;letter-spacing:-0.514px;">MCQ</span>
<span class="t" style="left:841.54px;top:604.00px;font-size:13px;color:#fff;font-weight:700;letter-spacing:-0.496px;">multi</span>
<span class="t" style="left:875.14px;top:604.00px;font-size:13px;color:#fff;font-weight:700;letter-spacing:-0.452px;">select</span>
<span class="t" style="left:730.98px;top:654.00px;font-size:12px;color:#111;letter-spacing:0.030px;">Asset Working status.</span>
<span class="t" style="left:730.76px;top:705.00px;font-size:12px;color:#111;letter-spacing:-0.540px;transform:scaleX(0.8875);transform-origin:0 0;">T1</span>
<span class="t" style="left:730.74px;top:751.00px;font-size:12px;color:#111;letter-spacing:-0.540px;transform:scaleX(0.9681);transform-origin:0 0;">T2</span>
<span class="t" style="left:1405.06px;top:655.00px;font-size:14px;color:#1f9d6b;letter-spacing:-0.018px;">Safe</span>
<span class="t" style="left:1418.86px;top:707.00px;font-size:12px;color:#111;letter-spacing:-0.178px;">Scan</span>
<span class="t" style="left:1418.86px;top:753.00px;font-size:12px;color:#111;letter-spacing:-0.2px;">Signature</span>
<div class="a" style="left:1427px;top:10px;width:482px;height:756px;overflow:hidden"><div class="a" style="left:30px;top:0;width:460px;height:800px;background:#fff;box-shadow:-5px 8px 23px 0 rgba(0,0,0,1)"></div></div>
<svg class="a" style="left:1473.4px;top:30.4px" width="16" height="16" viewBox="0 0 16 16"><path d="M1.4 1.4 L14.6 14.6 M14.6 1.4 L1.4 14.6" stroke="#000" stroke-width="2" fill="none"/></svg>
<div class="a" style="left:1474px;top:97.6px;width:430px;height:1px;background:#dcdcdc"></div>
<div class="a" style="left:1474px;top:175.9px;width:422.4px;height:156px;border-radius:10px;background:#eff0f5"></div><div class="a" style="left:1486.4px;top:188px;width:328.4px;height:37px;border-radius:8px;background:#fff;border:1px solid #e2e2e2;box-sizing:border-box"></div><div class="a" style="left:1830.7px;top:194.5px;width:22.6px;height:22.6px;border-radius:50%;background:#22ab43;box-shadow:0 0 0 .5px rgba(0,0,0,.10)"></div><div class="a" style="left:1864.8px;top:188px;width:20.4px;height:34px;background:#f1f1f1"></div><svg class="a" style="left:1865.2px;top:194.79999999999998px" width="19.6" height="19.6" viewBox="0 0 19.6 19.6"><circle cx="9.8" cy="9.8" r="9.8" fill="#8e8e8e"/>
<path d="M5.782000000000001 5.782000000000001 L13.818000000000001 13.818000000000001 M13.818000000000001 5.782000000000001 L5.782000000000001 13.818000000000001" stroke="#fff" stroke-width="1.9" fill="none"/></svg><svg class="a" style="left:1497px;top:244px" width="18" height="18" viewBox="0 0 18 18"><rect width="18" height="18" rx="2" fill="#6275f6"/>
<path d="M4 9.4 L7.4 12.7 L14.2 5.6" fill="none" stroke="#fff" stroke-width="1.7"/></svg><div class="a" style="left:1486.4px;top:281px;width:170.4px;height:38px;border-radius:4px;background:#fff;border:1px solid #e0e0e0;box-sizing:border-box"></div><div class="a" style="left:1673.2px;top:281px;width:191.6px;height:38px;border-radius:4px;background:#fff;border:1px solid #e0e0e0;box-sizing:border-box"></div><div class="a" style="left:1501.8px;top:293.8px;width:12.4px;height:12.4px;border-radius:50%;background:#f44336"></div><svg class="a" style="left:1631px;top:297.7px" width="10.2" height="5.3" viewBox="0 0 10.2 5.3"><path d="M0 0 H10.2 L5.1 5.3 Z" fill="#616161"/></svg>
<div class="a" style="left:1474px;top:346.9px;width:422.4px;height:156px;border-radius:10px;background:#eff0f5"></div><div class="a" style="left:1486.4px;top:359px;width:328.4px;height:37px;border-radius:8px;background:#fff;border:1px solid #e2e2e2;box-sizing:border-box"></div><div class="a" style="left:1830.7px;top:365.4px;width:22.6px;height:22.6px;border-radius:50%;background:#ee9222;box-shadow:0 0 0 .5px rgba(0,0,0,.10)"></div><div class="a" style="left:1864.8px;top:359px;width:20.4px;height:34px;background:#f1f1f1"></div><svg class="a" style="left:1865.2px;top:365.09999999999997px" width="19.6" height="19.6" viewBox="0 0 19.6 19.6"><circle cx="9.8" cy="9.8" r="9.8" fill="#8e8e8e"/>
<path d="M5.782000000000001 5.782000000000001 L13.818000000000001 13.818000000000001 M13.818000000000001 5.782000000000001 L5.782000000000001 13.818000000000001" stroke="#fff" stroke-width="1.9" fill="none"/></svg><svg class="a" style="left:1497px;top:415px" width="18" height="18" viewBox="0 0 18 18"><rect width="18" height="18" rx="2" fill="#6275f6"/>
<path d="M4 9.4 L7.4 12.7 L14.2 5.6" fill="none" stroke="#fff" stroke-width="1.7"/></svg><div class="a" style="left:1486.4px;top:452px;width:170.4px;height:38px;border-radius:4px;background:#fff;border:1px solid #e0e0e0;box-sizing:border-box"></div><div class="a" style="left:1673.2px;top:452px;width:191.6px;height:38px;border-radius:4px;background:#fff;border:1px solid #e0e0e0;box-sizing:border-box"></div><div class="a" style="left:1501.8px;top:464.8px;width:12.4px;height:12.4px;border-radius:50%;background:#fff59d"></div><svg class="a" style="left:1631px;top:468.7px" width="10.2" height="5.3" viewBox="0 0 10.2 5.3"><path d="M0 0 H10.2 L5.1 5.3 Z" fill="#616161"/></svg>
<div class="a" style="left:1474px;top:516.8px;width:422.4px;height:156px;border-radius:10px;background:#eff0f5"></div><div class="a" style="left:1486.4px;top:529px;width:328.4px;height:37px;border-radius:8px;background:#fff;border:1px solid #e2e2e2;box-sizing:border-box"></div><div class="a" style="left:1830.7px;top:535.6px;width:22.6px;height:22.6px;border-radius:50%;background:#ee0808;box-shadow:0 0 0 .5px rgba(0,0,0,.10)"></div><div class="a" style="left:1864.8px;top:529px;width:20.4px;height:34px;background:#f1f1f1"></div><svg class="a" style="left:1865.2px;top:535.4000000000001px" width="19.6" height="19.6" viewBox="0 0 19.6 19.6"><circle cx="9.8" cy="9.8" r="9.8" fill="#8e8e8e"/>
<path d="M5.782000000000001 5.782000000000001 L13.818000000000001 13.818000000000001 M13.818000000000001 5.782000000000001 L5.782000000000001 13.818000000000001" stroke="#fff" stroke-width="1.9" fill="none"/></svg><svg class="a" style="left:1497px;top:585px" width="18" height="18" viewBox="0 0 18 18"><rect width="18" height="18" rx="2" fill="#6275f6"/>
<path d="M4 9.4 L7.4 12.7 L14.2 5.6" fill="none" stroke="#fff" stroke-width="1.7"/></svg><div class="a" style="left:1486.4px;top:622px;width:170.4px;height:38px;border-radius:4px;background:#fff;border:1px solid #e0e0e0;box-sizing:border-box"></div><div class="a" style="left:1673.2px;top:622px;width:191.6px;height:37px;border-radius:4px;background:#eeeeee;border:1px solid #e0e0e0;box-sizing:border-box"></div><svg class="a" style="left:1631.8px;top:636.3px" width="9.4" height="5" viewBox="0 0 9.4 5"><path d="M0 0 H9.4 L4.7 5 Z" fill="#616161"/></svg>
<div class="a" style="left:1474px;top:687.4px;width:422.4px;height:156px;border-radius:10px;background:#eff0f5"></div><div class="a" style="left:1486.4px;top:699px;width:328.4px;height:37px;border-radius:8px;background:#fff;border:1px solid #e2e2e2;box-sizing:border-box"></div><div class="a" style="left:1830.7px;top:705.1px;width:22.6px;height:22.6px;border-radius:50%;background:#000;box-shadow:0 0 0 .5px rgba(0,0,0,.10)"></div><div class="a" style="left:1864.8px;top:699px;width:20.4px;height:34px;background:#f1f1f1"></div><svg class="a" style="left:1865.2px;top:704.9000000000001px" width="19.6" height="19.6" viewBox="0 0 19.6 19.6"><circle cx="9.8" cy="9.8" r="9.8" fill="#8e8e8e"/>
<path d="M5.782000000000001 5.782000000000001 L13.818000000000001 13.818000000000001 M13.818000000000001 5.782000000000001 L5.782000000000001 13.818000000000001" stroke="#fff" stroke-width="1.9" fill="none"/></svg><svg class="a" style="left:1497px;top:755px" width="18" height="18" viewBox="0 0 18 18"><rect width="18" height="18" rx="2" fill="#6275f6"/>
<path d="M4 9.4 L7.4 12.7 L14.2 5.6" fill="none" stroke="#fff" stroke-width="1.7"/></svg><div class="a" style="left:1486.4px;top:792px;width:170.4px;height:38px;border-radius:4px;background:#fff;border:1px solid #e0e0e0;box-sizing:border-box"></div><div class="a" style="left:1673.2px;top:792px;width:191.6px;height:38px;border-radius:4px;background:#fff;border:1px solid #e0e0e0;box-sizing:border-box"></div>
<div class="a" style="left:1897px;top:160.8px;width:7.4px;height:606px;background:#dddddd"></div>
<div class="a" style="left:1897px;top:160.8px;width:7.4px;height:501.2px;background:#8a8a8a"></div>
<span class="t" style="left:1473.36px;top:64.00px;font-size:20px;color:#000;font-weight:700;letter-spacing:-0.677px;">Multiple Choice</span>
<span class="t" style="left:1475.60px;top:140.00px;font-size:12px;color:#000;font-weight:700;letter-spacing:-0.540px;transform:scaleX(0.9930);transform-origin:0 0;">Response</span>
<span class="t" style="left:1495.30px;top:201.00px;font-size:12px;color:#111;letter-spacing:-0.094px;">Good</span>
<span class="t" style="left:1526.02px;top:246.00px;font-size:12px;color:#111;letter-spacing:-0.022px;">Mark as Exception</span>
<span class="t" style="left:1524.38px;top:294.00px;font-size:12px;color:#111;letter-spacing:-0.069px;">Alert</span>
<span class="t" style="left:1689.13px;top:293.00px;font-size:12px;color:#111;letter-spacing:0.038px;">Testing alert</span>
<span class="t" style="left:1494.92px;top:371.00px;font-size:12px;color:#111;letter-spacing:-0.196px;">Fair</span>
<span class="t" style="left:1526.02px;top:417.00px;font-size:12px;color:#111;letter-spacing:-0.022px;">Mark as Exception</span>
<span class="t" style="left:1524.35px;top:465.00px;font-size:12px;color:#111;letter-spacing:-0.137px;">Warning</span>
<span class="t" style="left:1689.13px;top:464.00px;font-size:12px;color:#111;letter-spacing:0.104px;">Testing warning</span>
<span class="t" style="left:1494.92px;top:542.00px;font-size:12px;color:#111;letter-spacing:-0.225px;">Poor</span>
<span class="t" style="left:1526.02px;top:587.00px;font-size:12px;color:#111;letter-spacing:-0.022px;">Mark as Exception</span>
<span class="t" style="left:1501.76px;top:631.00px;font-size:12px;color:#777;letter-spacing:0.417px;">Select Exception Type</span>
<span class="t" style="left:1689.13px;top:634.00px;font-size:12px;color:#666;letter-spacing:0.272px;">Testing danger</span>
<span class="t" style="left:1495.85px;top:711.00px;font-size:12px;color:#111;letter-spacing:-0.046px;">Wrost</span>
<span class="t" style="left:1526.02px;top:757.00px;font-size:12px;color:#111;letter-spacing:-0.022px;">Mark as Exception</span>
</div></body></html>
